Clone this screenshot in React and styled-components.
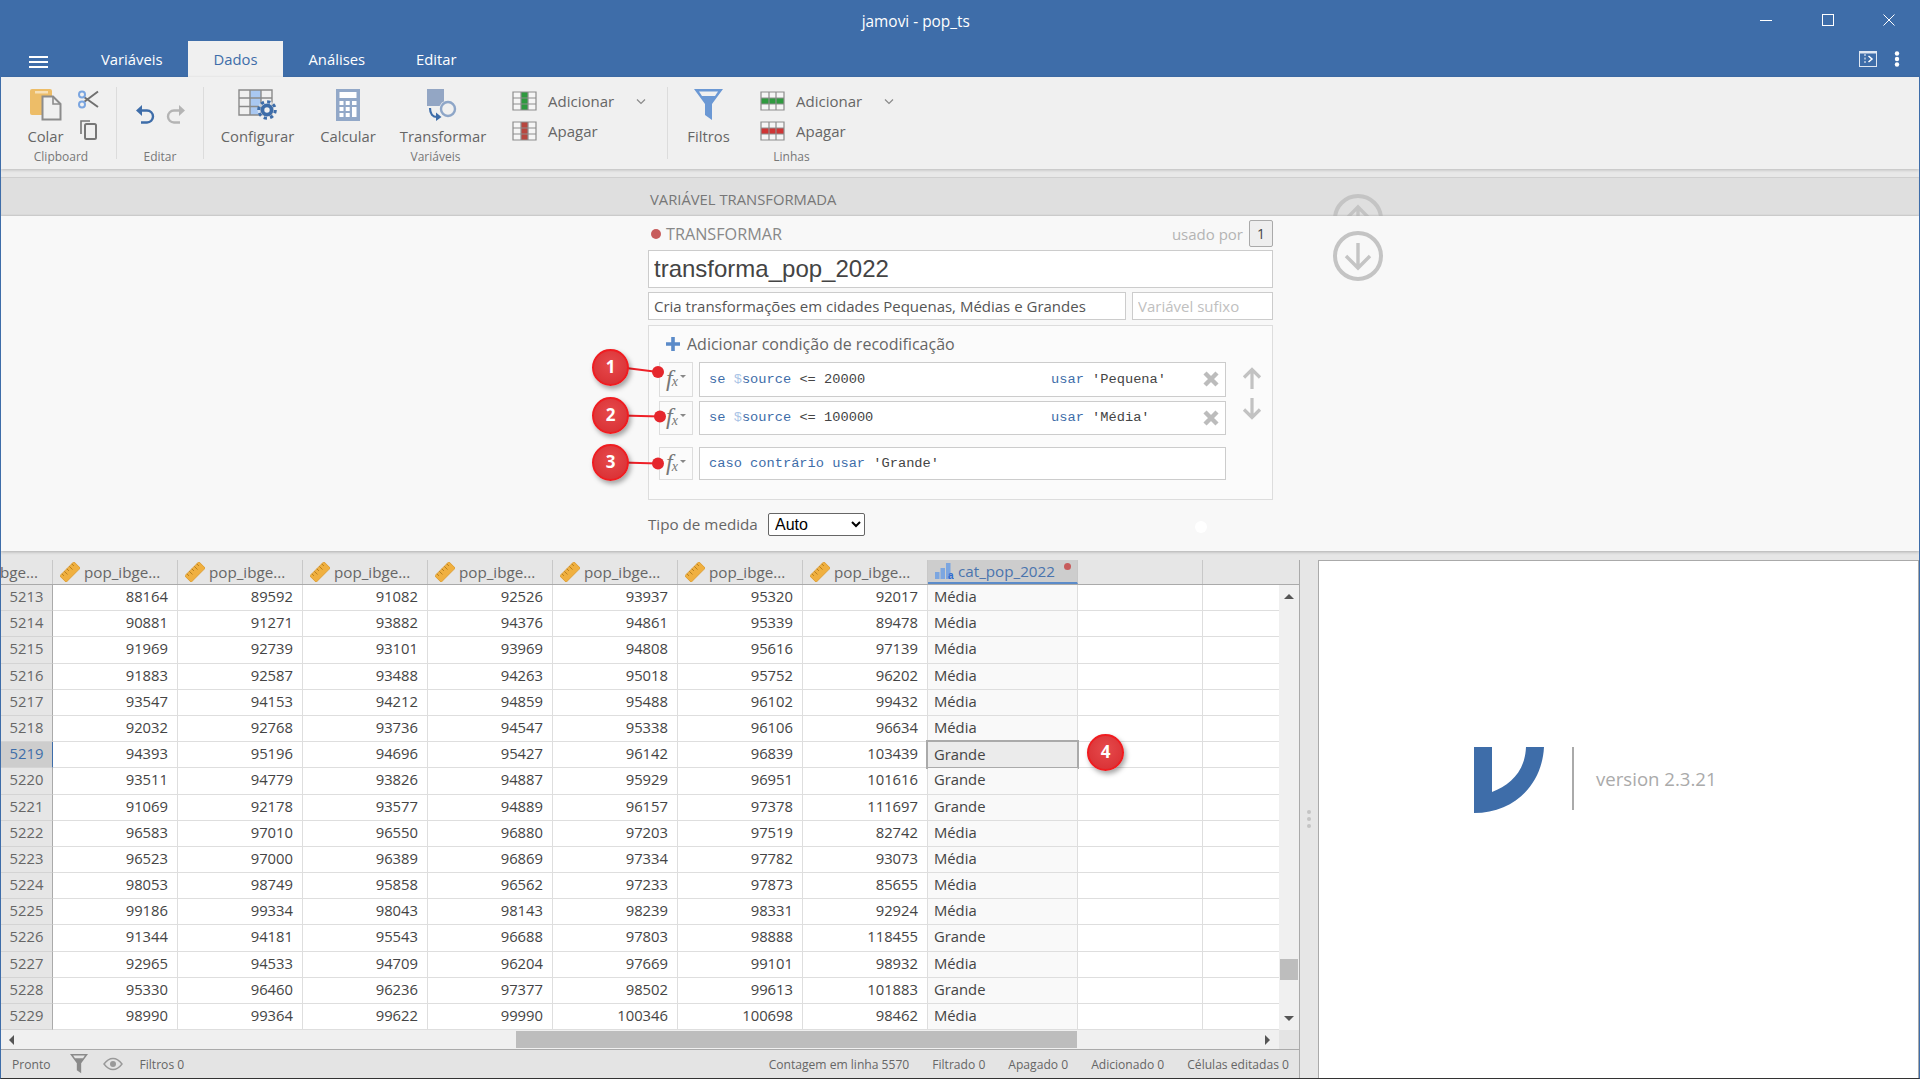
import React from 'react'
import styled, { createGlobalStyle } from 'styled-components'

const BLUE = '#3e6da9'
const UI_FONT = '"Open Sans", "Noto Sans", sans-serif'

const COLUMNS = '52px repeat(7, 125px) 150px 125px 1fr'

const ROWS = [
  [5213, 88164, 89592, 91082, 92526, 93937, 95320, 92017, 'Média'],
  [5214, 90881, 91271, 93882, 94376, 94861, 95339, 89478, 'Média'],
  [5215, 91969, 92739, 93101, 93969, 94808, 95616, 97139, 'Média'],
  [5216, 91883, 92587, 93488, 94263, 95018, 95752, 96202, 'Média'],
  [5217, 93547, 94153, 94212, 94859, 95488, 96102, 99432, 'Média'],
  [5218, 92032, 92768, 93736, 94547, 95338, 96106, 96634, 'Média'],
  [5219, 94393, 95196, 94696, 95427, 96142, 96839, 103439, 'Grande'],
  [5220, 93511, 94779, 93826, 94887, 95929, 96951, 101616, 'Grande'],
  [5221, 91069, 92178, 93577, 94889, 96157, 97378, 111697, 'Grande'],
  [5222, 96583, 97010, 96550, 96880, 97203, 97519, 82742, 'Média'],
  [5223, 96523, 97000, 96389, 96869, 97334, 97782, 93073, 'Média'],
  [5224, 98053, 98749, 95858, 96562, 97233, 97873, 85655, 'Média'],
  [5225, 99186, 99334, 98043, 98143, 98239, 98331, 92924, 'Média'],
  [5226, 91344, 94181, 95543, 96688, 97803, 98888, 118455, 'Grande'],
  [5227, 92965, 94533, 94709, 96204, 97669, 99101, 98932, 'Média'],
  [5228, 95330, 96460, 96236, 97377, 98502, 99613, 101883, 'Grande'],
  [5229, 98990, 99364, 99622, 99990, 100346, 100698, 98462, 'Média'],
]
const SELECTED_ROW = 5219

const GlobalStyle = createGlobalStyle`
  html, body { margin: 0; padding: 0; height: 100%; overflow: hidden; }
  body { font-family: ${UI_FONT}; color: #555; }
  * { box-sizing: border-box; }
`

// ---------- icons ----------

const PasteIcon = () => (
  <svg width="32" height="32" viewBox="0 0 32 32">
    <rect x="0" y="0" width="22" height="26" rx="2" fill="#edbd68" />
    <rect x="5" y="2" width="13" height="2.5" fill="#f6e0b8" />
    <path d="M12.5 7.5H23L30.5 15V30.5H12.5Z" fill="#f0f0f0" stroke="#8c8c8c" strokeWidth="2" />
    <path d="M23 7.5V15H30.5" fill="none" stroke="#8c8c8c" strokeWidth="1.6" />
  </svg>
)

const ScissorsIcon = () => (
  <svg width="21" height="19" viewBox="0 0 21 19">
    <path d="M6 7L20 17M6 12L20 1.5" stroke="#707070" strokeWidth="2" fill="none" />
    <circle cx="4" cy="4.5" r="3" fill="none" stroke="#7aa5e0" strokeWidth="2" />
    <circle cx="4" cy="14.5" r="3" fill="none" stroke="#7aa5e0" strokeWidth="2" />
  </svg>
)

const CopyIcon = () => (
  <svg width="17" height="20" viewBox="0 0 17 20">
    <path d="M1 14V1H10" fill="none" stroke="#777" strokeWidth="1.6" />
    <rect x="5" y="4" width="11" height="15" rx="1.5" fill="none" stroke="#777" strokeWidth="2" />
  </svg>
)

const UndoIcon = ({ color, flip }) => (
  <svg width="20" height="20" viewBox="0 0 20 20" style={flip ? { transform: 'scaleX(-1)' } : undefined}>
    <path d="M4 6.5H12a6 6 0 0 1 0 12H6" fill="none" stroke={color} strokeWidth="2.4" />
    <path d="M7 1L1 6.5L7 12Z" fill={color} />
  </svg>
)

const ConfigIcon = () => (
  <svg width="40" height="32" viewBox="0 0 40 32">
    <rect x="12" y="1" width="11" height="25" fill="#a9c8f2" />
    <path d="M1 1H34V26H1ZM12 1V26M23 1V26M1 9H34M1 17.5H34" fill="none" stroke="#8a8a8a" strokeWidth="1.4" />
    <circle cx="29" cy="21" r="9.5" fill="#f0f0f0" opacity="0.6" />
    <circle cx="29" cy="21" r="4.6" fill="none" stroke={BLUE} strokeWidth="3.8" />
    <circle cx="29" cy="21" r="8.3" fill="none" stroke={BLUE} strokeWidth="3" strokeDasharray="3.3 3.2" />
  </svg>
)

const CalcIcon = () => (
  <svg width="24" height="32" viewBox="0 0 24 32">
    <rect width="24" height="32" fill="#92a8c8" />
    <rect x="3.5" y="3" width="17" height="6" fill="#fff" />
    {[0, 1, 2].map((r) =>
      [0, 1].map((c) => (
        <rect key={`${r}${c}`} x={3.5 + c * 6.2} y={12 + r * 6} width="4" height="4" fill="#fff" />
      ))
    )}
    <rect x="16" y="12" width="4.5" height="4" fill="#fff" />
    <rect x="16" y="18" width="4.5" height="10" fill="#fff" />
  </svg>
)

const TransformIcon = () => (
  <svg width="32" height="32" viewBox="0 0 32 32">
    <rect x="0" y="0" width="17" height="17" fill="#93a6c4" />
    <circle cx="21" cy="20" r="8.8" fill="#f0f0f0" />
    <circle cx="21" cy="20" r="7" fill="none" stroke="#8ea6c8" strokeWidth="2.4" />
    <path d="M3 19C3 25 6 28 10 28" fill="none" stroke={BLUE} strokeWidth="2.2" />
    <path d="M9 23.5L14.5 28L9 32Z" fill={BLUE} />
  </svg>
)

const GridIcon = ({ color, rows }) => (
  <svg width="25" height="20" viewBox="0 0 25 20">
    <rect x="1" y="1" width="23" height="18" fill="#f5f5f5" />
    {rows ? (
      <rect x="1" y="7" width="23" height="6" fill={color} />
    ) : (
      <rect x="9" y="1" width="7" height="18" fill={color} />
    )}
    <path d="M1 1H24V19H1ZM9 1V19M16 1V19M1 7H24M1 13H24" fill="none" stroke="#8d8d8d" strokeWidth="1.2" />
  </svg>
)

const FunnelIcon = ({ size = 29, color = '#6b98d4', gap = '#f0f0f0' }) => (
  <svg width={size} height={size * 1.07} viewBox="0 0 29 31">
    <path d="M0 0H29L18 15V31L11 26V15Z" fill={color} />
    <path d="M5 2.5H24L21 7H8Z" fill={gap} />
  </svg>
)

const EyeIcon = () => (
  <svg width="20" height="14" viewBox="0 0 20 14">
    <path d="M1 7C4 3 7 1.5 10 1.5S16 3 19 7C16 11 13 12.5 10 12.5S4 11 1 7Z" fill="none" stroke="#999" strokeWidth="1.4" />
    <circle cx="10" cy="7" r="3" fill="#999" />
  </svg>
)

const RulerIcon = () => (
  <svg width="20" height="20" viewBox="0 0 20 20">
    <g transform="rotate(45 10 10)">
      <rect x="5.5" y="0" width="9" height="20" fill="#f0b040" stroke="#dc9a2c" strokeWidth="0.8" />
      <path d="M5.5 3H8.5M5.5 6.5H10M5.5 10H8.5M5.5 13.5H10M5.5 17H8.5" stroke="#b57d1c" strokeWidth="0.9" />
    </g>
  </svg>
)

const NominalIcon = () => (
  <svg width="19" height="17" viewBox="0 0 19 17">
    <rect x="0" y="9" width="4.5" height="7" fill="#7ca6e0" />
    <rect x="5.5" y="5" width="4.5" height="11" fill="#7ca6e0" />
    <rect x="11" y="0" width="4.5" height="16" fill="#7ca6e0" />
    <text x="13" y="16" fontSize="10" fontWeight="700" fill="#2f6bd0" fontFamily="Liberation Sans, sans-serif">a</text>
  </svg>
)

const CircleArrow = ({ up }) => (
  <svg width="50" height="50" viewBox="0 0 50 50">
    <circle cx="25" cy="25" r="23" fill="none" stroke="#c4c4c4" strokeWidth="4" />
    <path
      d={up ? 'M25 38V13M13 25L25 13L37 25' : 'M25 12V37M13 25L25 37L37 25'}
      fill="none"
      stroke="#c4c4c4"
      strokeWidth="3.4"
    />
  </svg>
)

const CrossIcon = () => (
  <svg width="16" height="16" viewBox="0 0 16 16">
    <path d="M2 2L14 14M14 2L2 14" stroke="#bcbcbc" strokeWidth="4.4" />
  </svg>
)

const MoveArrow = ({ up }) => (
  <svg width="20" height="22" viewBox="0 0 20 22">
    <path
      d={up ? 'M10 22V3M2 10.5L10 2.5L18 10.5' : 'M10 0V19M2 11.5L10 19.5L18 11.5'}
      fill="none"
      stroke="#c2c2c2"
      strokeWidth="3.2"
    />
  </svg>
)

const ChevronIcon = () => (
  <svg width="10" height="7" viewBox="0 0 10 7">
    <path d="M1 1.5L5 5.5L9 1.5" fill="none" stroke="#8a8a8a" strokeWidth="1.2" />
  </svg>
)

const PlusIcon = () => (
  <svg width="14" height="14" viewBox="0 0 14 14">
    <path d="M7 0V14M0 7H14" stroke="#5b8bc9" strokeWidth="3.6" />
  </svg>
)

const Logo = () => (
  <svg width="70" height="66" viewBox="0 0 70 66">
    <path d="M0 0H18V45C36 38 51 25 52 0H70C68 38 40 66 0 66Z" fill={BLUE} />
  </svg>
)

// ---------- annotation ----------

const Callout = ({ n, top, dot }) => (
  <CalloutBox $top={top}>
    <svg width="78" height="37" viewBox="0 0 78 37">
      <line x1="30" y1="18.5" x2={dot[0]} y2={dot[1]} stroke="#ee2027" strokeWidth="2" />
      <circle cx={dot[0]} cy={dot[1]} r="6" fill="#e5262c" />
    </svg>
    <Bubble>{n}</Bubble>
  </CalloutBox>
)

// ---------- page ----------

export default function App() {
  return (
    <Window>
      <GlobalStyle />
      <TitleBar>
        <WindowTitle>jamovi - pop_ts</WindowTitle>
        <WindowButton>
          <svg width="12" height="12" viewBox="0 0 12 12"><path d="M0 6.5H12" stroke="#fff" /></svg>
        </WindowButton>
        <WindowButton>
          <svg width="12" height="12" viewBox="0 0 12 12"><rect x="0.5" y="0.5" width="11" height="11" fill="none" stroke="#fff" /></svg>
        </WindowButton>
        <WindowButton>
          <svg width="12" height="12" viewBox="0 0 12 12"><path d="M0.5 0.5L11.5 11.5M11.5 0.5L0.5 11.5" stroke="#fff" /></svg>
        </WindowButton>
      </TitleBar>

      <TabBar>
        <Hamburger>
          <svg width="19" height="12" viewBox="0 0 19 12"><path d="M0 1H19M0 6H19M0 11H19" stroke="#fff" strokeWidth="2" /></svg>
        </Hamburger>
        <Tab>Variáveis</Tab>
        <Tab $active>Dados</Tab>
        <Tab>Análises</Tab>
        <Tab>Editar</Tab>
        <TabTools>
          <svg width="18" height="16" viewBox="0 0 18 16">
            <rect x="0.5" y="0.5" width="17" height="15" fill="none" stroke="#dfe7f2" />
            <path d="M0 1.5H18" stroke="#dfe7f2" strokeWidth="2" />
            <path d="M6 3V13" stroke="#fff" strokeDasharray="2 1.5" />
            <path d="M9.5 5L13 8L9.5 11" fill="none" stroke="#fff" strokeWidth="1.5" />
          </svg>
          <svg width="6" height="16" viewBox="0 0 6 16">
            <circle cx="3" cy="2.5" r="2.2" fill="#fff" />
            <circle cx="3" cy="8" r="2.2" fill="#fff" />
            <circle cx="3" cy="13.5" r="2.2" fill="#fff" />
          </svg>
        </TabTools>
      </TabBar>

      <Ribbon>
        <RibbonGroup $w={116}>
          <GroupBody $pad={19}>
            <BigButton $w={51}>
              <IconSlot><PasteIcon /></IconSlot>
              <BigLabel>Colar</BigLabel>
            </BigButton>
            <SmallStack>
              <ScissorsIcon />
              <CopyIcon />
            </SmallStack>
          </GroupBody>
          <GroupLabel $shift={5}>Clipboard</GroupLabel>
        </RibbonGroup>

        <RibbonGroup $w={87}>
          <GroupBody $pad={18} $top={17}>
            <UndoIcon color={BLUE} />
            <Spacer />
            <UndoIcon color="#b4b4b4" flip />
          </GroupBody>
          <GroupLabel>Editar</GroupLabel>
        </RibbonGroup>

        <RibbonGroup $w={464}>
          <GroupBody>
            <BigButton $w={107}>
              <IconSlot><ConfigIcon /></IconSlot>
              <BigLabel>Configurar</BigLabel>
            </BigButton>
            <BigButton $w={74}>
              <IconSlot><CalcIcon /></IconSlot>
              <BigLabel>Calcular</BigLabel>
            </BigButton>
            <BigButton $w={116}>
              <IconSlot><TransformIcon /></IconSlot>
              <BigLabel>Transformar</BigLabel>
            </BigButton>
            <SideList>
              <SideItem>
                <GridIcon color="#2f9a3f" />
                <SideLabel $wide>Adicionar</SideLabel>
                <ChevronIcon />
              </SideItem>
              <SideItem>
                <GridIcon color="#b8473f" />
                <SideLabel>Apagar</SideLabel>
              </SideItem>
            </SideList>
          </GroupBody>
          <GroupLabel>Variáveis</GroupLabel>
        </RibbonGroup>

        <RibbonGroup $w={247} $last>
          <GroupBody>
            <BigButton $w={81}>
              <IconSlot><FunnelIcon /></IconSlot>
              <BigLabel>Filtros</BigLabel>
            </BigButton>
            <SideList>
              <SideItem>
                <GridIcon color="#2f9a3f" rows />
                <SideLabel $wide>Adicionar</SideLabel>
                <ChevronIcon />
              </SideItem>
              <SideItem>
                <GridIcon color="#cf3535" rows />
                <SideLabel>Apagar</SideLabel>
              </SideItem>
            </SideList>
          </GroupBody>
          <GroupLabel>Linhas</GroupLabel>
        </RibbonGroup>
      </Ribbon>

      <BandGap />
      <Band>
        <BandTitle>VARIÁVEL TRANSFORMADA</BandTitle>
        <BandArrow><CircleArrow up /></BandArrow>
      </Band>

      <Editor>
        <DownArrow><CircleArrow /></DownArrow>
        <FormHead>
          <StatusDot />
          <FormKind>TRANSFORMAR</FormKind>
          <UsedBy>usado por</UsedBy>
          <UsedCount>1</UsedCount>
        </FormHead>
        <NameInput readOnly value="transforma_pop_2022" />
        <DescRow>
          <DescInput readOnly value="Cria transformações em cidades Pequenas, Médias e Grandes" />
          <SuffixInput readOnly placeholder="Variável sufixo" />
        </DescRow>

        <RecodeBox>
          <AddRow>
            <PlusIcon />
            <AddLabel>Adicionar condição de recodificação</AddLabel>
          </AddRow>
          <CondBlock>
            <CondList>
              <CondRow>
                <FxButton>
                  <Callout n={1} top={-14} dot={[66, 23]} />
                  <FxF>f</FxF><FxX>x</FxX><FxCaret />
                </FxButton>
                <CondInput>
                  <CondLeft><Kw>se</Kw> <Dollar>$</Dollar><Kw>source</Kw> {'<= 20000'}</CondLeft>
                  <Kw>usar</Kw>&nbsp;<span>'Pequena'</span>
                  <RemoveSlot><CrossIcon /></RemoveSlot>
                </CondInput>
              </CondRow>
              <CondRow>
                <FxButton>
                  <Callout n={2} top={-5} dot={[68, 19.5]} />
                  <FxF>f</FxF><FxX>x</FxX><FxCaret />
                </FxButton>
                <CondInput>
                  <CondLeft><Kw>se</Kw> <Dollar>$</Dollar><Kw>source</Kw> {'<= 100000'}</CondLeft>
                  <Kw>usar</Kw>&nbsp;<span>'Média'</span>
                  <RemoveSlot><CrossIcon /></RemoveSlot>
                </CondInput>
              </CondRow>
            </CondList>
            <ReorderColumn>
              <MoveArrow up />
              <MoveArrow />
            </ReorderColumn>
          </CondBlock>
          <CondRow $last>
            <FxButton>
              <Callout n={3} top={-4} dot={[66, 19.5]} />
              <FxF>f</FxF><FxX>x</FxX><FxCaret />
            </FxButton>
            <CondInput>
              <Kw>caso contrário usar</Kw>&nbsp;<span>'Grande'</span>
            </CondInput>
          </CondRow>
        </RecodeBox>

        <MeasureRow>
          <MeasureLabel>Tipo de medida</MeasureLabel>
          <MeasureSelect defaultValue="Auto">
            <option>Auto</option>
            <option>Nominal</option>
            <option>Ordinal</option>
            <option>Contínua</option>
          </MeasureSelect>
          <GhostDot />
        </MeasureRow>
      </Editor>

      <Workspace>
        <TablePane>
          <GridHeader>
            <HeaderCell $clip><span>pop_ibge...</span></HeaderCell>
            {[0, 1, 2, 3, 4, 5, 6].map((i) => (
              <HeaderCell key={i}>
                <RulerIcon />
                <span>pop_ibge...</span>
              </HeaderCell>
            ))}
            <HeaderCell $active>
              <NominalIcon />
              <span>cat_pop_2022</span>
              <ChangedDot />
            </HeaderCell>
            <HeaderCell />
            <HeaderCell $plain />
          </GridHeader>

          <GridBody>
            <GridRows>
              {ROWS.map((row) => (
                <GridRow key={row[0]}>
                  <RowNumber $selected={row[0] === SELECTED_ROW}>{row[0]}</RowNumber>
                  {row.slice(1, 8).map((v, i) => (
                    <NumCell key={i}>{v}</NumCell>
                  ))}
                  <CatCell>
                    {row[8]}
                    {row[0] === SELECTED_ROW && <SelectedFrame>{row[8]}</SelectedFrame>}
                    {row[0] === SELECTED_ROW && <Bubble $free>4</Bubble>}
                  </CatCell>
                  <BlankCell />
                  <BlankCell $plain />
                </GridRow>
              ))}
            </GridRows>
            <VScroll>
              <ArrowUp />
              <VThumb />
              <ArrowDown />
            </VScroll>
          </GridBody>

          <HScrollRow>
            <HTrack>
              <ArrowLeft />
              <HThumb />
              <ArrowRight />
            </HTrack>
            <ScrollCorner />
          </HScrollRow>

          <StatusBar>
            <StatusText>Pronto</StatusText>
            <FunnelIcon size={18} color="#8a8a8a" gap="#e4e4e4" />
            <EyeIcon />
            <StatusText>Filtros 0</StatusText>
            <StatusRight>
              <StatusText>Contagem em linha 5570</StatusText>
              <StatusText>Filtrado 0</StatusText>
              <StatusText>Apagado 0</StatusText>
              <StatusText>Adicionado 0</StatusText>
              <StatusText>Células editadas 0</StatusText>
            </StatusRight>
          </StatusBar>
        </TablePane>

        <Gutter>
          <GutterDot />
          <GutterDot />
          <GutterDot />
        </Gutter>

        <WelcomePanel>
          <Logo />
          <LogoRule />
          <VersionText>version 2.3.21</VersionText>
        </WelcomePanel>
      </Workspace>
    </Window>
  )
}

// ---------- styles ----------

const Window = styled.div`
  width: 1920px;
  height: 1079px;
  display: flex;
  flex-direction: column;
  overflow: hidden;
  background: #e6e6e6;
  border-left: 1px solid ${BLUE};
  border-right: 1px solid ${BLUE};
  border-bottom: 1px solid #333;
`

const TitleBar = styled.div`
  height: 41px;
  flex: none;
  display: flex;
  background: ${BLUE};
  color: #fff;
`

const WindowTitle = styled.div`
  flex: 1;
  padding-left: 96px;
  text-align: center;
  font-size: 15.4px;
  line-height: 43px;
`

const WindowButton = styled.div`
  width: 61.5px;
  display: flex;
  align-items: center;
  justify-content: center;
  padding: 0 0 1px 2px;
`

const TabBar = styled.div`
  height: 36px;
  flex: none;
  display: flex;
  background: ${BLUE};
`

const Hamburger = styled.div`
  width: 74.5px;
  padding: 10px 0 0 28px;
`

const Tab = styled.div`
  padding: 0 25.5px;
  font-size: 14.8px;
  line-height: 37px;
  color: ${(p) => (p.$active ? BLUE : '#fff')};
  background: ${(p) => (p.$active ? '#f0f0f0' : 'transparent')};
`

const TabTools = styled.div`
  margin-left: auto;
  display: flex;
  align-items: flex-start;
  gap: 17px;
  padding: 10px 19px 0 0;
`

const Ribbon = styled.div`
  height: 92px;
  flex: none;
  display: flex;
  padding-top: 10px;
  background: #f0f0f0;
  box-shadow: 0 1px 3px rgba(0, 0, 0, 0.2);
  position: relative;
  z-index: 2;
`

const RibbonGroup = styled.div`
  width: ${(p) => p.$w}px;
  height: 72px;
  flex: none;
  border-right: ${(p) => (p.$last ? 'none' : '1px solid #dcdcdc')};
`

const GroupBody = styled.div`
  height: 62px;
  display: flex;
  align-items: flex-start;
  padding-left: ${(p) => p.$pad || 0}px;
  padding-top: ${(p) => p.$top || 0}px;
`

const GroupLabel = styled.div`
  height: 16px;
  padding-left: ${(p) => p.$shift || 0}px;
  line-height: 16px;
  text-align: center;
  font-size: 12px;
  color: #777;
`

const BigButton = styled.div`
  width: ${(p) => p.$w}px;
  flex: none;
  display: flex;
  flex-direction: column;
  align-items: center;
`

const IconSlot = styled.div`
  height: 33px;
  padding-top: 2px;
  display: flex;
`

const BigLabel = styled.div`
  margin-top: 6px;
  line-height: 20px;
  font-size: 14.8px;
  color: #666;
  white-space: nowrap;
`

const SmallStack = styled.div`
  display: flex;
  flex-direction: column;
  align-items: flex-start;
  gap: 11px;
  margin-left: 7px;
  padding-top: 3px;
  svg:last-child {
    margin-left: 2px;
  }
`

const Spacer = styled.div`
  width: 11px;
`

const SideList = styled.div`
  margin-left: 11px;
  padding-top: 4px;
  display: flex;
  flex-direction: column;
  gap: 10px;
`

const SideItem = styled.div`
  height: 20px;
  display: flex;
  align-items: center;
`

const SideLabel = styled.div`
  margin-left: 11px;
  width: ${(p) => (p.$wide ? '88px' : 'auto')};
  font-size: 15px;
  color: #666;
`

const BandGap = styled.div`
  height: 8px;
  flex: none;
  background: #e8e8e8;
`

const Band = styled.div`
  height: 39px;
  flex: none;
  position: relative;
  overflow: hidden;
  border-top: 1px solid #cfcfcf;
  background: #dfdfdf;
  box-shadow: inset 0 -1px 2px rgba(0, 0, 0, 0.06);
`

const BandTitle = styled.div`
  padding-left: 649px;
  line-height: 43px;
  font-size: 14.8px;
  color: #777;
`

const BandArrow = styled.div`
  position: absolute;
  left: 1332px;
  top: 16px;
`

const Editor = styled.div`
  height: 335px;
  flex: none;
  position: relative;
  padding: 4px 0 0 647px;
  background: #f8f8f8;
  box-shadow: 0 1px 3px rgba(0, 0, 0, 0.25);
`

const DownArrow = styled.div`
  position: absolute;
  left: 1332px;
  top: 15px;
`

const FormHead = styled.div`
  width: 625px;
  height: 27px;
  display: flex;
  align-items: center;
`

const StatusDot = styled.div`
  width: 10px;
  height: 10px;
  margin-left: 3px;
  border-radius: 50%;
  background: #c75c5c;
`

const FormKind = styled.div`
  margin-left: 5px;
  font-size: 16.2px;
  color: #888;
`

const UsedBy = styled.div`
  margin-left: auto;
  font-size: 15px;
  color: #b4b4b4;
`

const UsedCount = styled.div`
  width: 24px;
  height: 27px;
  margin-left: 6px;
  border: 1px solid #aaa;
  border-radius: 2px;
  background: #eee;
  text-align: center;
  font-size: 14px;
  line-height: 25px;
  color: #444;
`

const NameInput = styled.input`
  display: block;
  width: 625px;
  height: 38px;
  margin-top: 3px;
  padding: 0 5px;
  border: 1px solid #ccc;
  border-radius: 0;
  outline: none;
  background: #fff;
  font-family: "Liberation Sans", Arial, sans-serif;
  font-size: 24px;
  color: #444;
`

const DescRow = styled.div`
  width: 625px;
  height: 28px;
  margin-top: 4px;
  display: flex;
  gap: 6px;
`

const DescInput = styled.input`
  width: 478px;
  height: 100%;
  padding: 0 5px;
  border: 1px solid #ccc;
  border-radius: 0;
  outline: none;
  background: #fff;
  font-family: ${UI_FONT};
  font-size: 15px;
  color: #555;
`

const SuffixInput = styled(DescInput)`
  width: 141px;
  &::placeholder {
    color: #c0c0c0;
    opacity: 1;
  }
`

const RecodeBox = styled.div`
  width: 625px;
  height: 175px;
  margin-top: 5px;
  padding-left: 10px;
  border: 1px solid #ddd;
  background: #fbfbfb;
`

const AddRow = styled.div`
  height: 36px;
  padding-left: 7px;
  display: flex;
  align-items: center;
  gap: 7px;
`

const AddLabel = styled.div`
  font-size: 16px;
  color: #666;
`

const CondBlock = styled.div`
  display: flex;
`

const CondList = styled.div`
  display: flex;
  flex-direction: column;
  gap: 4px;
`

const CondRow = styled.div`
  height: ${(p) => (p.$last ? '33px' : '34.5px')};
  margin-top: ${(p) => (p.$last ? '12px' : '0')};
  display: flex;
  gap: 6px;
`

const FxButton = styled.div`
  width: 34px;
  position: relative;
  display: flex;
  align-items: center;
  padding: 0 0 3px 6px;
  border: 1px solid #ddd;
  background: #fbfbfb;
  color: #777;
`

const FxF = styled.span`
  font-family: "Liberation Serif", serif;
  font-style: italic;
  font-size: 24px;
  line-height: 1;
`

const FxX = styled.span`
  font-family: "Liberation Serif", serif;
  font-style: italic;
  font-size: 14px;
  line-height: 1;
  margin: 9px 0 0 -1px;
`

const FxCaret = styled.span`
  width: 0;
  height: 0;
  margin: -2px 0 0 2px;
  border-left: 3px solid transparent;
  border-right: 3px solid transparent;
  border-top: 3px solid #888;
`

const CondInput = styled.div`
  width: 527px;
  display: flex;
  align-items: center;
  padding-left: 9px;
  border: 1px solid #ccc;
  background: #fff;
  font-family: "Liberation Mono", monospace;
  font-size: 13.7px;
  color: #444;
  white-space: pre;
`

const CondLeft = styled.div`
  width: 342px;
`

const Kw = styled.span`
  color: ${BLUE};
`

const Dollar = styled.span`
  color: #a9c3e6;
`

const RemoveSlot = styled.div`
  margin-left: auto;
  margin-right: 6px;
  display: flex;
`

const ReorderColumn = styled.div`
  margin-left: 16px;
  padding-top: 5px;
  display: flex;
  flex-direction: column;
  gap: 9px;
`

const MeasureRow = styled.div`
  width: 625px;
  height: 23px;
  margin-top: 13px;
  display: flex;
  align-items: center;
  position: relative;
`

const MeasureLabel = styled.div`
  width: 120px;
  padding-bottom: 1px;
  font-size: 15.2px;
  line-height: 20px;
  color: #666;
  white-space: nowrap;
`

const MeasureSelect = styled.select`
  width: 97px;
  height: 23px;
  padding: 0 0 0 2px;
  border: 1px solid #666;
  border-radius: 2px;
  background: #fff;
  font-family: "Liberation Sans", Arial, sans-serif;
  font-size: 16px;
  color: #000;
`

const GhostDot = styled.div`
  position: absolute;
  left: 547px;
  top: 8px;
  width: 12px;
  height: 12px;
  border-radius: 50%;
  background: #fff;
`

const CalloutBox = styled.div`
  position: absolute;
  left: -68px;
  top: ${(p) => p.$top}px;
  width: 78px;
  height: 37px;
  z-index: 5;
  svg {
    display: block;
  }
`

const Bubble = styled.div`
  position: absolute;
  left: ${(p) => (p.$free ? '159px' : '0')};
  top: ${(p) => (p.$free ? '-8px' : '0')};
  width: 37px;
  height: 37px;
  border: 2px solid #f01c20;
  border-radius: 50%;
  background: radial-gradient(circle at 50% 40%, #e64a4c, #d72c30);
  box-shadow: 2px 3px 5px rgba(0, 0, 0, 0.35);
  text-align: center;
  font-family: ${UI_FONT};
  font-size: 17px;
  font-weight: 700;
  line-height: 32px;
  color: #fff;
  z-index: 6;
`

const Workspace = styled.div`
  height: 518px;
  margin-top: 9px;
  flex: none;
  display: flex;
`

const TablePane = styled.div`
  width: 1299px;
  flex: none;
  display: flex;
  flex-direction: column;
  border-right: 1px solid #aaa;
  background: #f0f0f0;
`

const GridHeader = styled.div`
  height: 25px;
  flex: none;
  display: grid;
  grid-template-columns: ${COLUMNS};
  background: #e6e6e6;
  border-bottom: 1px solid #aaa;
`

const HeaderCell = styled.div`
  position: relative;
  display: flex;
  align-items: center;
  justify-content: ${(p) => (p.$clip ? 'flex-end' : 'flex-start')};
  gap: 4px;
  padding: ${(p) => (p.$clip ? '0 14px 0 0' : '0 0 0 7px')};
  overflow: hidden;
  white-space: nowrap;
  border-right: ${(p) => (p.$plain ? 'none' : '1px solid #c8c8c8')};
  border-bottom: ${(p) => (p.$active ? `2px solid #5b8bc9` : 'none')};
  background: ${(p) => (p.$active ? '#cdcdcd' : 'transparent')};
  font-size: 15.2px;
  color: ${(p) => (p.$active ? '#4a74ae' : '#666')};
  span {
    flex: none;
  }
`

const ChangedDot = styled.div`
  position: absolute;
  right: 6px;
  top: 3px;
  width: 7px;
  height: 7px;
  border-radius: 50%;
  background: #c75c5c;
`

const GridBody = styled.div`
  flex: 1;
  min-height: 0;
  display: flex;
  background: #fff;
`

const GridRows = styled.div`
  width: 1278px;
  flex: none;
  overflow: hidden;
`

const GridRow = styled.div`
  height: 26.2px;
  display: grid;
  grid-template-columns: ${COLUMNS};
  font-size: 14.8px;
  color: #444;
`

const RowNumber = styled.div`
  text-align: center;
  line-height: 23.8px;
  color: ${(p) => (p.$selected ? BLUE : '#666')};
  background: ${(p) => (p.$selected ? '#cdcdcd' : '#e6e6e6')};
  border-right: 1px solid ${(p) => (p.$selected ? BLUE : '#aaa')};
  border-bottom: 1px solid #d4d4d4;
`

const NumCell = styled.div`
  padding-right: 9px;
  text-align: right;
  line-height: 23.8px;
  border-right: 1px solid #dedede;
  border-bottom: 1px solid #dedede;
`

const CatCell = styled.div`
  position: relative;
  padding-left: 6px;
  line-height: 23.8px;
  background: #f9f9f9;
  border-right: 1px solid #dedede;
  border-bottom: 1px solid #dedede;
`

const SelectedFrame = styled.div`
  position: absolute;
  left: -2px;
  right: -2px;
  top: -2px;
  bottom: -2px;
  padding-left: 6px;
  line-height: 25px;
  border: 2px solid #aaa;
  background: #ebebeb;
`

const BlankCell = styled.div`
  border-right: ${(p) => (p.$plain ? 'none' : '1px solid #dedede')};
  border-bottom: 1px solid #dedede;
`

const VScroll = styled.div`
  flex: 1;
  display: flex;
  flex-direction: column;
  align-items: center;
  padding: 9px 0 9px;
  background: #f0f0f0;
`

const ArrowUp = styled.div`
  width: 0;
  height: 0;
  border-left: 5px solid transparent;
  border-right: 5px solid transparent;
  border-bottom: 5px solid #555;
`

const ArrowDown = styled.div`
  width: 0;
  height: 0;
  margin-top: auto;
  border-left: 5px solid transparent;
  border-right: 5px solid transparent;
  border-top: 5px solid #555;
`

const VThumb = styled.div`
  width: 18px;
  height: 21px;
  margin-top: 360px;
  background: #bdbdbd;
`

const HScrollRow = styled.div`
  height: 19px;
  flex: none;
  display: flex;
  background: #f0f0f0;
`

const HTrack = styled.div`
  width: 1278px;
  display: flex;
  align-items: center;
  padding-left: 8px;
`

const ArrowLeft = styled.div`
  width: 0;
  height: 0;
  border-top: 5px solid transparent;
  border-bottom: 5px solid transparent;
  border-right: 5px solid #555;
`

const ArrowRight = styled.div`
  width: 0;
  height: 0;
  margin-left: auto;
  margin-right: 9px;
  border-top: 5px solid transparent;
  border-bottom: 5px solid transparent;
  border-left: 5px solid #555;
`

const HThumb = styled.div`
  width: 561px;
  height: 17px;
  margin-left: 502px;
  background: #bdbdbd;
`

const ScrollCorner = styled.div`
  flex: 1;
  background: #e4e4e4;
`

const StatusBar = styled.div`
  height: 29px;
  flex: none;
  display: flex;
  align-items: center;
  padding: 0 10px 0 11px;
  border-top: 1px solid #aaa;
  background: #e4e4e4;
  svg:nth-of-type(1) {
    margin-left: 19px;
  }
  svg:nth-of-type(2) {
    margin: 0 17px 0 15px;
  }
`

const StatusRight = styled.div`
  margin-left: auto;
  display: flex;
  gap: 23px;
`

const StatusText = styled.div`
  font-size: 12.1px;
  color: #666;
  white-space: nowrap;
`

const Gutter = styled.div`
  width: 18px;
  flex: none;
  display: flex;
  flex-direction: column;
  align-items: center;
  justify-content: center;
  gap: 3px;
`

const GutterDot = styled.div`
  width: 4px;
  height: 4px;
  border-radius: 50%;
  background: #c4c4c4;
`

const WelcomePanel = styled.div`
  flex: 1;
  display: flex;
  align-items: flex-start;
  padding: 186px 0 0 155px;
  border: 1px solid #aaa;
  border-bottom: none;
  background: #fff;
`

const LogoRule = styled.div`
  width: 2px;
  height: 63px;
  margin-left: 28px;
  background: #aaa;
`

const VersionText = styled.div`
  margin: 19px 0 0 22px;
  font-size: 18.6px;
  color: #aaa;
`
